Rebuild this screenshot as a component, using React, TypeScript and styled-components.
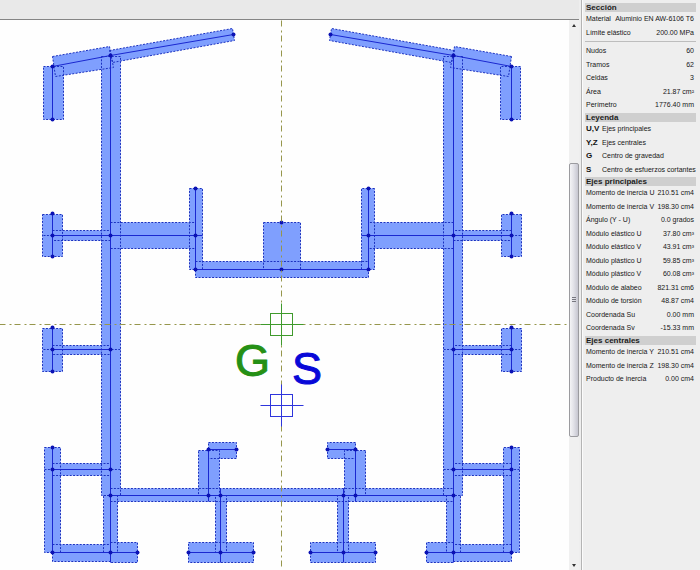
import React from "react";
import styled, { createGlobalStyle } from "styled-components";

const GlobalStyle = createGlobalStyle`
  * { box-sizing: border-box; }
  html, body { margin: 0; padding: 0; background: #eeeeee; }
  body { font-family: "Liberation Sans", Arial, sans-serif; color: #161616; }
`;

const Page = styled.main`
  display: grid;
  grid-template-columns: minmax(0, 1fr) 119px;
  min-height: 100vh;
`;

const Workspace = styled.section`
  display: grid;
  grid-template-rows: 20px minmax(0, 1fr);
  height: 100vh;
  padding-right: 2px;
`;

const TopBar = styled.div`
  background: #e9e9e9;
  border-bottom: 1px solid #858585;
`;

const Viewport = styled.div`
  display: grid;
  grid-template-columns: minmax(0, 1fr) 10px;
  min-height: 0;
`;

const Drawing = styled.svg`
  display: block;
  width: 100%;
  height: 100%;
  background: #fefefe;
`;

const Letter = styled.text`
  font-family: "Liberation Sans", Arial, sans-serif;
  font-size: 45px;
`;

const ScrollBar = styled.div`
  display: grid;
  grid-template-rows: 10px 133fr 274fr 123fr 10px;
  background: #f0f0f0;
`;

const ArrowButton = styled.button`
  display: grid;
  place-items: center;
  padding: 0;
  border: 0;
  background: transparent;
`;

const Thumb = styled.div`
  grid-row: 3;
  display: grid;
  place-items: center;
  border: 1px solid #9b9b9f;
  border-radius: 2px;
  background: linear-gradient(90deg, #f4f4f6, #e2e2e8 45%, #c6c6d0);
`;

const DownSlot = styled.div`
  grid-row: 5;
  display: grid;
`;

const Panel = styled.aside`
  display: flex;
  flex-direction: column;
  gap: 1px;
  padding: 3px 4px 0 3px;
  border-left: 1px solid #b4b4b4;
  box-shadow: inset 1px 0 #fbfbfb;
`;

const Heading = styled.h2`
  margin: 0;
  padding-left: 1px;
  height: 9px;
  font-size: 8px;
  line-height: 9px;
  font-weight: bold;
  color: #1c1c1c;
  background: #cfcfcf;
  white-space: nowrap;
`;

const Table = styled.table`
  display: block;
  width: 100%;
  font-size: 7px;
  white-space: nowrap;
  tbody { display: block; }
`;

const Row = styled.tr<{ $spread?: boolean }>`
  display: flex;
  justify-content: ${(p) => (p.$spread ? "space-between" : "flex-start")};
  height: 13px;
  line-height: 13px;
  &:nth-child(odd) { height: 14px; line-height: 14px; }
`;

const Label = styled.th`
  padding: 0 0 0 1px;
  text-align: left;
  font-weight: normal;
`;

const Value = styled.td`
  padding: 0 2px 0 0;
  text-align: right;
`;

const LegendSymbol = styled.th`
  width: 17px;
  flex: none;
  padding: 0 0 0 1px;
  text-align: left;
  font-size: 8px;
  font-weight: bold;
  color: #111111;
`;

const Meaning = styled.td`
  padding: 0;
`;

const Rule = styled.hr`
  width: 100%;
  height: 1px;
  margin: 2px 0;
  border: 0;
  background: #bdbdbd;
`;

type Point = [number, number];

const LEFT_RIGHT_SUM = 563;
const mirror = ([x, y]: Point): Point => [LEFT_RIGHT_SUM - x, y];
const rect = (x1: number, y1: number, x2: number, y2: number): Point[] => [
  [x1, y1], [x2, y1], [x2, y2], [x1, y2],
];
const both = (shapes: Point[][]) => [...shapes, ...shapes.map((s) => s.map(mirror))];

const plates: Point[][] = [
  ...both([
    [[52, 56], [109, 46], [113, 67], [55, 76]],
    [[109, 50], [232, 28], [234, 40], [112, 62]],
    rect(43, 66, 63, 119),
    rect(101, 56, 120, 495),
    rect(42, 214, 62, 256),
    rect(52, 230, 110, 240),
    rect(42, 328, 62, 371),
    rect(52, 345, 110, 354),
    rect(110, 222, 195, 248),
    rect(189, 188, 202, 269),
    rect(44, 447, 60, 552),
    rect(52, 463, 110, 475),
    rect(52, 544, 110, 561),
    rect(103, 495, 117, 552),
    rect(110, 542, 137, 562),
    rect(198, 450, 219, 495),
    rect(208, 442, 236, 458),
    rect(215, 495, 226, 552),
    rect(188, 542, 253, 562),
  ]),
  rect(195, 261, 368, 277),
  rect(263, 222, 300, 269),
  rect(110, 488, 453, 501),
];

const centrelines: Point[][] = [
  ...both([
    [[52, 119], [52, 66], [110, 55], [233, 34]],
    [[110, 55], [110, 562]],
    [[52, 214], [52, 256]],
    [[52, 235], [202, 235]],
    [[52, 328], [52, 371]],
    [[52, 349], [110, 349]],
    [[195, 188], [195, 269]],
    [[52, 447], [52, 552], [137, 552]],
    [[52, 469], [110, 469]],
    [[236, 449], [208, 449], [208, 501]],
    [[220, 488], [220, 562]],
    [[188, 552], [253, 552]],
  ]),
  [[195, 269], [368, 269]],
  [[110, 495], [453, 495]],
];

const endMarks: Point[][] = both([
  [[43, 235], [52, 235]],
  [[43, 349], [52, 349]],
  [[111, 349], [120, 349]],
  [[44, 469], [52, 469]],
  [[111, 469], [120, 469]],
]);

const nodes: Point[] = [
  ...both([[
    [52, 66], [52, 119], [110, 55], [233, 34],
    [52, 213], [52, 235], [52, 256], [110, 235],
    [52, 327], [52, 349], [52, 371], [110, 349],
    [195, 188], [195, 235], [195, 269],
    [52, 447], [52, 469], [52, 552], [110, 469],
    [110, 495], [110, 552], [137, 552],
    [208, 449], [236, 449], [208, 495],
    [220, 495], [220, 552], [188, 552], [253, 552],
  ]]).flat(),
  [281, 222],
  [281, 269],
];

const toPoints = (shape: Point[]) => shape.map((p) => p.join(",")).join(" ");

function Target({ y, colour }: { y: number; colour: string }) {
  return (
    <g stroke={colour} strokeWidth="1" fill="none">
      <rect x="270" y={y - 11} width="22" height="22" />
      <path d={`M260 ${y}H303M281 ${y - 21}V${y + 21}`} />
    </g>
  );
}

function SectionDrawing() {
  return (
    <Drawing viewBox="0 20 569 550" role="img" aria-label="Sección">
      <g transform="translate(0.5 0.5)">
        <g fill="#7f9ffe">
          {plates.map((s, i) => <polygon key={i} points={toPoints(s)} />)}
        </g>
        <g fill="none" stroke="#1c32c0" strokeWidth="1" strokeDasharray="2 1.4">
          {plates.map((s, i) => <polygon key={i} points={toPoints(s)} />)}
          {endMarks.map((s, i) => <polyline key={i} points={toPoints(s)} />)}
        </g>
        <g fill="none" stroke="#1a28d0" strokeWidth="1">
          {centrelines.map((s, i) => <polyline key={i} points={toPoints(s)} />)}
        </g>
        <g fill="#0b12b4">
          {nodes.map(([x, y], i) => <circle key={i} cx={x} cy={y} r="2" />)}
        </g>
        <path
          d="M-1 324H570M281 20V570"
          stroke="#96964c"
          strokeWidth="1"
          strokeDasharray="6 4 2 3"
          fill="none"
        />
        <Target y={324} colour="#3f9a2c" />
        <Target y={405} colour="#2e35dc" />
      </g>
      <Letter x="235" y="376" fill="#259015" stroke="#259015">G</Letter>
      <Letter x="292" y="384" fill="#0808d8" stroke="#0808d8">S</Letter>
    </Drawing>
  );
}

const material = [
  ["Material", "Aluminio EN AW-6106 T6"],
  ["Límite elástico", "200.00 MPa"],
];
const geometry = [
  ["Nudos", "60"],
  ["Tramos", "62"],
  ["Celdas", "3"],
  ["Área", "21.87 cm²"],
  ["Perímetro", "1776.40 mm"],
];
const legend = [
  ["U,V", "Ejes principales"],
  ["Y,Z", "Ejes centrales"],
  ["G", "Centro de gravedad"],
  ["S", "Centro de esfuerzos cortantes"],
];
const principal = [
  ["Momento de inercia U", "210.51 cm4"],
  ["Momento de inercia V", "198.30 cm4"],
  ["Ángulo (Y - U)", "0.0 grados"],
  ["Módulo elástico U", "37.80 cm³"],
  ["Módulo elástico V", "43.91 cm³"],
  ["Módulo plástico U", "59.85 cm³"],
  ["Módulo plástico V", "60.08 cm³"],
  ["Módulo de alabeo", "821.31 cm6"],
  ["Módulo de torsión", "48.87 cm4"],
  ["Coordenada Su", "0.00 mm"],
  ["Coordenada Sv", "-15.33 mm"],
];
const central = [
  ["Momento de inercia Y", "210.51 cm4"],
  ["Momento de inercia Z", "198.30 cm4"],
  ["Producto de inercia", "0.00 cm4"],
];

function Properties({ rows }: { rows: string[][] }) {
  return (
    <Table>
      <tbody>
        {rows.map(([label, value]) => (
          <Row key={label} $spread>
            <Label scope="row">{label}</Label>
            <Value>{value}</Value>
          </Row>
        ))}
      </tbody>
    </Table>
  );
}

export default function App() {
  return (
    <>
      <GlobalStyle />
      <Page>
        <Workspace>
          <TopBar />
          <Viewport>
            <SectionDrawing />
            <ScrollBar>
              <ArrowButton type="button" aria-label="Subir">
                <svg width="4" height="3" viewBox="0 0 4 3"><path d="M0 3L2 0L4 3Z" fill="#333" /></svg>
              </ArrowButton>
              <Thumb>
                <svg width="4" height="6" viewBox="0 0 4 6"><path d="M0 .5H4M0 2.5H4M0 4.5H4" stroke="#77777f" /></svg>
              </Thumb>
              <DownSlot>
                <ArrowButton type="button" aria-label="Bajar">
                  <svg width="4" height="3" viewBox="0 0 4 3"><path d="M0 0L2 3L4 0Z" fill="#333" /></svg>
                </ArrowButton>
              </DownSlot>
            </ScrollBar>
          </Viewport>
        </Workspace>
        <Panel>
          <section>
            <Heading>Sección</Heading>
            <Properties rows={material} />
            <Rule />
            <Properties rows={geometry} />
          </section>
          <section>
            <Heading>Leyenda</Heading>
            <Table>
              <tbody>
                {legend.map(([symbol, meaning]) => (
                  <Row key={symbol}>
                    <LegendSymbol scope="row">{symbol}</LegendSymbol>
                    <Meaning>{meaning}</Meaning>
                  </Row>
                ))}
              </tbody>
            </Table>
          </section>
          <section>
            <Heading>Ejes principales</Heading>
            <Properties rows={principal} />
          </section>
          <section>
            <Heading>Ejes centrales</Heading>
            <Properties rows={central} />
          </section>
        </Panel>
      </Page>
    </>
  );
}
